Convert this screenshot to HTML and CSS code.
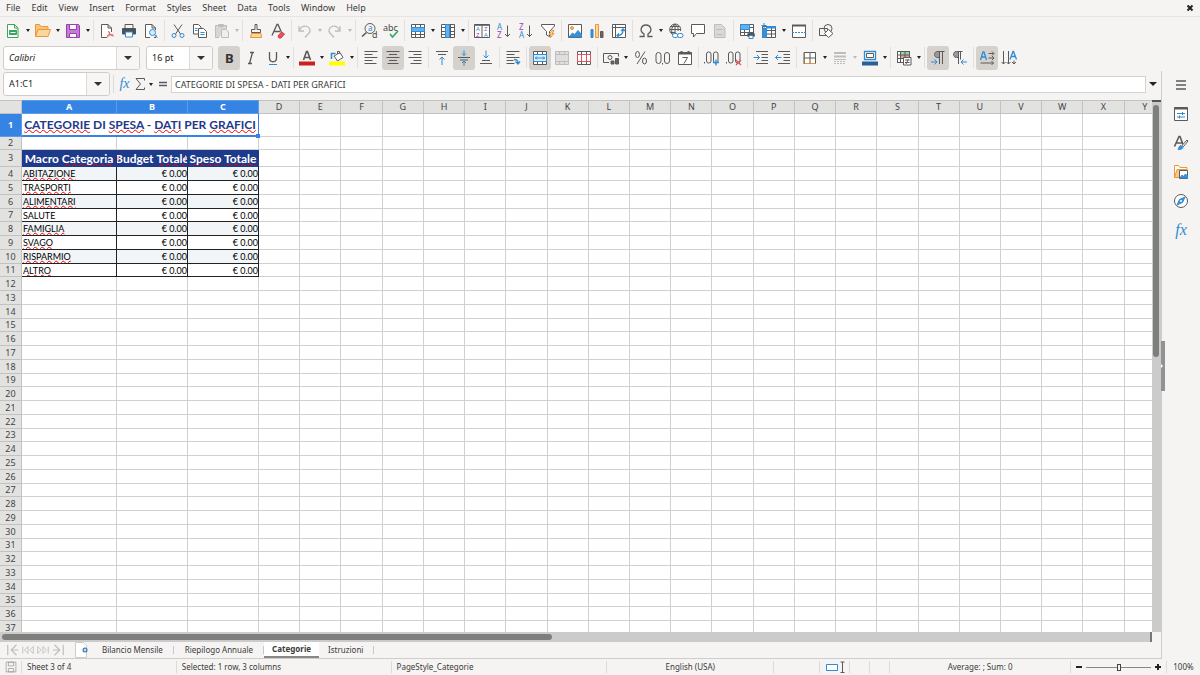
FILE: index.html
```html
<!DOCTYPE html>
<html lang="en">
<head>
<meta charset="utf-8">
<meta name="viewport" content="width=device-width, initial-scale=1">
<title>Categorie</title>
<link rel="stylesheet" href="styles.css">
</head>
<body>
<nav class="menubar" aria-label="Menu">
  <button>File</button><button>Edit</button><button>View</button><button>Insert</button><button>Format</button><button>Styles</button><button>Sheet</button><button>Data</button><button>Tools</button><button>Window</button><button>Help</button>
  <button class="close" aria-label="Close"><svg class="icon tiny" viewBox="0 0 8 8"><path class="heavy" d="M1.5 1.500l5 5M6.500 1.500l-5 5"/></svg></button>
</nav>

<div class="toolbar" role="toolbar" aria-label="Standard">
  <div class="group">
    <button class="tool" aria-label="New"><svg class="icon" viewBox="0 0 16 16"><path class="green" fill="#fff" d="M2.500 1.500h7l3.500 3.500v9.500h-10.500zM9.500 1.500v3.500h3.500"/><path class="green" fill="#3ba659" d="M4.500 7.500h7v4h-7z"/><path stroke="#fff" d="M5.500 9.500h5"/></svg></button><button class="dd" aria-label="New options"></button>
    <button class="tool" aria-label="Open"><svg class="icon" viewBox="0 0 16 16"><path stroke="#e8973a" fill="#f7c47a" d="M.5 13.500v-12h4l1.500 2h7v2.500"/><path stroke="#e8973a" fill="#fbd79b" d="M.5 13.500l2.500-7h12.500l-2.500 7z"/></svg></button><button class="dd" aria-label="Open options"></button>
    <button class="tool" aria-label="Save"><svg class="icon" viewBox="0 0 16 16"><path stroke="#9a3fb0" fill="#c77ad6" d="M1.500 1.500h12l1 1v12h-13z"/><path stroke="#9a3fb0" fill="#fff" d="M4.500 1.500h7v5h-7zM4.500 10.500h7v4h-7z"/></svg></button><button class="dd" aria-label="Save options"></button>
  </div>
  <div class="group">
    <button class="tool" aria-label="Export as PDF"><svg class="icon" viewBox="0 0 16 16"><path fill="#fff" d="M8 14.500h-5.500v-13h6.500l3.500 3.500v4M9 1.500v3.500h3.500"/><path class="red" d="M9.500 8c1 3 2.500 5 5 5M7.500 14.500c2.500-1 3-3 3-5.500M8 13c2-1.500 4-1.500 6.500-1"/></svg></button>
    <button class="tool" aria-label="Print"><svg class="icon" viewBox="0 0 16 16"><path d="M4 5v-3.500h8v3.500"/><rect x="1" y="5" width="14" height="6.500" rx="1" fill="#4a5358" stroke="none"/><path class="blue" fill="#fff" d="M4.500 9h7v5h-7z"/></svg></button>
    <button class="tool" aria-label="Print preview"><svg class="icon" viewBox="0 0 16 16"><path fill="#fff" d="M7 14.500h-4.500v-13h6.500l3.500 3.500v2M9 1.500v3.500h3.500M13 12v2.500h-2"/><circle class="blue" cx="9.500" cy="9.500" r="3" fill="#d9ecfb"/><path class="blue" d="M11.500 11.500l3 3"/></svg></button>
  </div>
  <div class="group">
    <button class="tool" aria-label="Cut"><svg class="icon" viewBox="0 0 16 16"><path d="M4 1.500l6.500 9.500M12 1.500l-6.500 9.500"/><circle class="blue" cx="4" cy="12.500" r="2"/><circle class="blue" cx="12" cy="12.500" r="2"/></svg></button>
    <button class="tool" aria-label="Copy"><svg class="icon" viewBox="0 0 16 16"><path fill="#fff" d="M1.500 1.500h5l2.500 2.500v7h-7.500z"/><path fill="#fff" d="M6.500 5.500h5l3 3v6h-8z"/><path class="blue" d="M3 5.500h2.500M3 7.500h2.500M8.500 9.500h4M8.500 11.500h4"/></svg></button>
    <button class="tool" aria-label="Paste"><svg class="icon dim" viewBox="0 0 16 16"><path fill="#d6d6d6" d="M5 14.500h-3.500v-12h11v3.500M4.500 1.500h5v2h-5z"/><path fill="#eee" d="M7.500 6.500h4.500l2.500 2.500v5.500h-7z"/></svg></button><button class="dd dim" aria-label="Paste options"></button>
  </div>
  <div class="group">
    <button class="tool" aria-label="Clone formatting"><svg class="icon" viewBox="0 0 16 16"><path d="M7 1.500h2v5h3.500v3h-9v-3h3.500z"/><path stroke="#e8973a" fill="#fbd79b" d="M3.500 10.500h9.500l.5 4h-11z"/></svg></button>
    <button class="tool" aria-label="Clear formatting"><svg class="icon" viewBox="0 0 16 16"><path class="mid" d="M2 12.500l5-11h1l4 9M4 8.500h6"/><path stroke="#d9363e" fill="#e5575e" d="M8 13l3.500-4 3 2-3.500 4h-2z"/></svg></button>
  </div>
  <div class="group">
    <button class="tool" aria-label="Undo"><svg class="icon dim" viewBox="0 0 16 16"><path class="mid" d="M2 3v5h5M2 8c2-4 5-5.500 8-4.500s4 4.500 2 6.500l-4 4.500"/></svg></button><button class="dd dim" aria-label="Undo list"></button>
    <button class="tool" aria-label="Redo"><svg class="icon dim" viewBox="0 0 16 16"><path class="mid" d="M13 3v5h-5M13 8c-2-4-5-5.500-8-4.500s-4 4.500-2 6.500l4 4.500"/></svg></button><button class="dd dim" aria-label="Redo list"></button>
  </div>
  <div class="group">
    <button class="tool" aria-label="Find and replace"><svg class="icon" viewBox="0 0 16 16"><circle cx="9" cy="5.500" r="5"/><path class="thick" d="M5.500 9.500l-4.500 4"/><text class="glyph blue-text" x="7" y="8" font-size="8">a</text><text class="glyph" x="11" y="15" font-size="9">d</text></svg></button>
    <button class="tool" aria-label="Spelling"><svg class="icon" viewBox="0 0 16 16"><text class="glyph" x="0" y="8" font-size="9">abc</text><path stroke="#2fa866" class="thick" d="M7 11l2.500 3 5.500-6"/></svg></button>
  </div>
  <div class="group">
    <button class="tool" aria-label="Row"><svg class="icon" viewBox="0 0 16 16"><path fill="#fff" d="M1.500 1.500h13v13h-13zM1.500 4.500h13M1.500 8.500h13M1.500 11.500h13M5.500 1.500v13M10.500 1.500v13"/><path fill="#63b1ee" class="blue" d="M1.500 4.500h13v4h-13z"/></svg></button><button class="dd" aria-label="Row options"></button>
    <button class="tool" aria-label="Column"><svg class="icon" viewBox="0 0 16 16"><path fill="#fff" d="M1.500 1.500h13v13h-13zM1.500 4.500h13M1.500 8.500h13M1.500 11.500h13M5.500 1.500v13M10.500 1.500v13"/><path fill="#63b1ee" class="blue" d="M5.500 1.500h4v13h-4z"/></svg></button><button class="dd" aria-label="Column options"></button>
  </div>
  <div class="group">
    <button class="tool" aria-label="Sort"><svg class="icon" viewBox="0 0 16 16"><path fill="#fff" d="M.5 1.500h15v13h-15zM8 1.500v13"/><path class="thick" d="M.5 2h15"/><text class="glyph blue-text" x="2" y="8" font-size="6">A</text><text class="glyph purple-text" x="10" y="8" font-size="6">Z</text><text class="glyph purple-text" x="2" y="14" font-size="6">Z</text><text class="glyph blue-text" x="10" y="14" font-size="6">A</text></svg></button>
    <button class="tool" aria-label="Sort ascending"><svg class="icon" viewBox="0 0 16 16"><text class="glyph blue-text" x="1" y="7" font-size="8">A</text><text class="glyph purple-text" x="1" y="15" font-size="8">Z</text><path d="M11.500 2.500v11M9 11l2.500 2.500 2.500-2.500"/></svg></button>
    <button class="tool" aria-label="Sort descending"><svg class="icon" viewBox="0 0 16 16"><text class="glyph purple-text" x="1" y="7" font-size="8">Z</text><text class="glyph blue-text" x="1" y="15" font-size="8">A</text><path d="M11.500 2.500v11M9 11l2.500 2.500 2.500-2.500"/></svg></button>
    <button class="tool" aria-label="AutoFilter"><svg class="icon" viewBox="0 0 16 16"><path fill="#fff" d="M1.500 1.500h13v1.500l-5 5.500v5l-3-1.500v-3.500l-5-5.500z"/><path stroke="#e8973a" fill="#fbd79b" d="M12 7.500l-3 4h2l-1 3.500 4-4.500h-2l2-3z"/></svg></button>
  </div>
  <div class="group">
    <button class="tool" aria-label="Image"><svg class="icon" viewBox="0 0 16 16"><path fill="#fff" d="M1.500 1.500h13v13h-13z"/><circle cx="5" cy="5" r="1.500" fill="#fbb65c" stroke="#e8973a"/><path class="blue" fill="#3b8fd3" d="M2 14l3.500-4 2 1.500 3.500-4 3.500 4v2.500z"/></svg></button>
    <button class="tool" aria-label="Chart"><svg class="icon" viewBox="0 0 16 16"><path class="blue" fill="#3b8fd3" d="M2 6.500h2v8h-2z"/><path stroke="#e8973a" fill="#fbd79b" d="M6.500 1.500h3v13h-3z"/><path fill="#666" d="M11.500 8.500h2.500v6h-2.500z"/></svg></button>
    <button class="tool" aria-label="Pivot table"><svg class="icon" viewBox="0 0 16 16"><path fill="#fff" d="M1.500 1.500h13v13h-13zM1.500 4.500h13M4.500 1.500v13"/><path class="blue mid" d="M6.500 12.500c4 0 5.500-1.500 5.500-5.500M10 8l2-2 2 2M8 10.500l-2 2 2 2"/></svg></button>
  </div>
  <div class="group">
    <button class="tool" aria-label="Special character"><svg class="icon" viewBox="0 0 16 16"><path class="mid" d="M1.500 13.500h4.500v-2.500c-5-3-3-9 2-9s7 6 2 9v2.500h4.500"/></svg></button><button class="dd" aria-label="Symbols"></button>
    <button class="tool" aria-label="Hyperlink"><svg class="icon" viewBox="0 0 16 16"><path d="M12.500 8a5.500 5.500 0 1 0-6 4M1.500 6.500h11M2.500 3.500h9M2.500 9.500h5M7 1v10M5 12c-2-3-2-8 2-11 3 2 3.500 5 3 7"/><rect class="blue" x="4.500" y="10.500" width="5.500" height="4" rx="2" fill="#fff"/><rect class="blue" x="9.500" y="10.500" width="5.500" height="4" rx="2" fill="#fff"/></svg></button>
    <button class="tool" aria-label="Comment"><svg class="icon" viewBox="0 0 16 16"><path fill="#fff" d="M1.500 1.500h13v9h-8l-3 3.500v-3.500h-2z"/></svg></button>
    <button class="tool" aria-label="Headers and footers"><svg class="icon dim" viewBox="0 0 16 16"><path fill="#d9d9d9" d="M2.500 1.500h7l3.500 3.500v9.500h-10.500z"/><path d="M4.500 6.500h6M4.500 11.500h6"/></svg></button>
  </div>
  <div class="group">
    <button class="tool" aria-label="Print area"><svg class="icon" viewBox="0 0 16 16"><path fill="#fff" d="M1.500 1.500h13v11h-13zM1.500 4.500h13M1.500 9.500h13M5.500 1.500v11M10.500 1.500v11"/><path class="blue" fill="#63b1ee" d="M1.500 1.500h9v5h-9z"/><rect x="8.500" y="10.500" width="7" height="3" rx="1" fill="#4a5358"/><path class="blue" fill="#fff" d="M10 12.500h4v3h-4z"/></svg></button>
    <button class="tool" aria-label="Freeze rows and columns"><svg class="icon" viewBox="0 0 16 16"><path fill="#fff" d="M1.500 3.500h13v11h-13zM1.500 7.500h13M1.500 11h13M10.500 3.500v11"/><path class="blue" fill="#3b8fd3" d="M1.500 5.500h4v9h-4zM5.500 3.500h9v1.500h-9zM3 0v5M.5 2.500h5"/></svg></button><button class="dd" aria-label="Freeze options"></button>
    <button class="tool" aria-label="Split window"><svg class="icon" viewBox="0 0 16 16"><path fill="#fff" d="M1.500 2v12.500h13v-12.500"/><path class="fat" d="M1 2.500h14"/><path class="blue" stroke-dasharray="2 1" d="M1 9.500h14"/></svg></button>
  </div>
  <div class="group">
    <button class="tool" aria-label="Show draw functions"><svg class="icon" viewBox="0 0 16 16"><path d="M1.500 5.500h8v7h-8z"/><circle cx="10" cy="5.500" r="4"/><path fill="#fff" d="M10.500 6.500l4.500 4-4.500 4-4-4z"/></svg></button>
  </div>
</div>

<div class="toolbar" role="toolbar" aria-label="Formatting">
  <div class="combo font-name"><input class="italic" value="Calibri" aria-label="Font name"><button aria-label="Font list"></button></div>
  <div class="combo font-size"><input value="16 pt" aria-label="Font size"><button aria-label="Font size list"></button></div>
  <div class="group">
    <button class="tool on" aria-label="Bold"><svg class="icon" viewBox="0 0 16 16"><text class="glyph strong" x="4" y="13" font-size="13">B</text></svg></button>
    <button class="tool" aria-label="Italic"><svg class="icon" viewBox="0 0 16 16"><path class="mid" d="M7 2.500h4M5 13.500h4M9.500 2.500l-3 11"/></svg></button>
    <button class="tool" aria-label="Underline"><svg class="icon" viewBox="0 0 16 16"><path class="mid" d="M4.500 2v6c0 5 7 5 7 0v-6"/><path class="blue" d="M4 14.500h8"/></svg></button><button class="dd" aria-label="Underline options"></button>
  </div>
  <div class="group">
    <button class="tool" aria-label="Font color"><svg class="icon" viewBox="0 0 16 16"><path class="thick" d="M4.500 10l3-8.500h1l3 8.500M5.500 7.500h5"/><path fill="#c9211e" stroke="none" d="M0 11.500h16v4h-16z"/></svg></button><button class="dd" aria-label="Font color list"></button>
    <button class="tool" aria-label="Highlighting"><svg class="icon" viewBox="0 0 16 16"><path class="blue thick" d="M2.500 9v-5.500h4"/><path fill="#fff" d="M5 6l6-3.500 3 5-5.500 3.500zM8.500 4v-2.500h2v2"/><path fill="#ff0" stroke="none" d="M0 11.500h16v4h-16z"/></svg></button><button class="dd" aria-label="Highlighting list"></button>
  </div>
  <div class="group">
    <button class="tool" aria-label="Align left"><svg class="icon" viewBox="0 0 16 16"><path d="M1.500 1.500h13M1.500 4.500h8M1.500 7.500h13M1.500 10.500h8M1.500 13.500h12"/></svg></button>
    <button class="tool on" aria-label="Center horizontally"><svg class="icon" viewBox="0 0 16 16"><path d="M1.500 1.500h13M4 4.500h8M1.500 7.500h13M4 10.500h8M2.500 13.500h11"/></svg></button>
    <button class="tool" aria-label="Align right"><svg class="icon" viewBox="0 0 16 16"><path d="M1.500 1.500h13M6.500 4.500h8M1.500 7.500h13M6.500 10.500h8M3.500 13.500h11"/></svg></button>
  </div>
  <div class="group">
    <button class="tool" aria-label="Align top"><svg class="icon" viewBox="0 0 16 16"><path d="M2 1.500h12M4 4.500h8"/><path class="blue" d="M8 15v-8M5.500 9.500l2.500-2.500 2.500 2.500"/></svg></button>
    <button class="tool on" aria-label="Center vertically"><svg class="icon" viewBox="0 0 16 16"><path d="M2 7.500h12M4 10h8"/><path class="blue" d="M8 .5v5M6 3.500l2 2 2-2M8 16v-5M6 13l2-2 2 2"/></svg></button>
    <button class="tool" aria-label="Align bottom"><svg class="icon" viewBox="0 0 16 16"><path d="M4 10.500h8M2 13.500h12"/><path class="blue" d="M8 .5v7.500M5.500 5.500l2.500 2.500 2.500-2.500"/></svg></button>
  </div>
  <div class="group">
    <button class="tool" aria-label="Wrap text"><svg class="icon" viewBox="0 0 16 16"><path d="M1.500 1.500h13M1.500 4.500h8M1.500 7.500h13M1.500 10.500h7M1.500 13.500h8"/><path class="blue mid" d="M9 9.500c3 0 4 .5 4 4M10.500 11.500l2.500 2.500 2-2.500"/></svg></button>
  </div>
  <div class="group">
    <button class="tool on" aria-label="Merge and center cells"><svg class="icon" viewBox="0 0 16 16"><path fill="#fff" d="M1.500 1.500h13v13h-13zM1.500 4.500h13M1.500 11.500h13M5.500 1.500v3M10.500 1.500v3M5.500 11.500v3M10.500 11.500v3"/><path class="blue" fill="#d9ecfb" d="M1.500 4.500h13v7h-13zM3 8h10M5 6.500l-1.500 1.500 1.500 1.500M11 6.500l1.500 1.500-1.500 1.500"/></svg></button>
    <button class="tool" aria-label="Merge cells"><svg class="icon dim" viewBox="0 0 16 16"><path fill="#dedede" d="M1.500 1.500h13v13h-13zM1.500 4.500h13M1.500 11.500h13M5.500 1.500v3M10.500 1.500v3M5.500 11.500v3M10.500 11.500v3"/></svg></button>
    <button class="tool" aria-label="Unmerge cells"><svg class="icon" viewBox="0 0 16 16"><path fill="#fff" d="M1.500 1.500h13v13h-13zM5.500 1.500v13M10.500 1.500v13"/><path class="red" fill="#fff" d="M1.500 4.500h13v7h-13zM5.500 4.500v7M10.500 4.500v7"/></svg></button>
  </div>
  <div class="group">
    <button class="tool" aria-label="Format as currency"><svg class="icon" viewBox="0 0 16 16"><path d="M6 12.500h-5.500v-9h15v3"/><circle cx="7" cy="7.500" r="2"/><path fill="#666" d="M8 11h3v3h-3zM12.500 8.500h3v5.500h-3z"/></svg></button><button class="dd" aria-label="Currency list"></button>
    <button class="tool" aria-label="Format as percent"><svg class="icon" viewBox="0 0 16 16"><ellipse cx="4.500" cy="4.500" rx="2" ry="3"/><ellipse cx="11.500" cy="11" rx="2" ry="3"/><path d="M12 1.500l-8 12.500"/></svg></button>
    <button class="tool" aria-label="Format as number"><svg class="icon" viewBox="0 0 16 16"><rect x="1" y="2.500" width="5" height="11" rx="2.500"/><rect x="9.500" y="2.500" width="5" height="11" rx="2.500"/><path d="M7.500 13v1.500"/></svg></button>
    <button class="tool" aria-label="Format as date"><svg class="icon" viewBox="0 0 16 16"><path fill="#fff" d="M1.500 2.500h13v12h-13z"/><path class="fat" d="M1.500 3.500h13M4.500 1v3M11.500 1v3"/><path d="M5.500 7.500h5l-3.500 6"/></svg></button>
  </div>
  <div class="group">
    <button class="tool" aria-label="Add decimal place"><svg class="icon" viewBox="0 0 16 16"><rect x="2.500" y="2" width="4.500" height="11" rx="2"/><rect x="9.500" y="2" width="4.500" height="11" rx="2"/><path d="M.5 12v1.500"/><path class="blue mid" d="M9 12.500h6M12 9.500v6"/></svg></button>
    <button class="tool" aria-label="Delete decimal place"><svg class="icon" viewBox="0 0 16 16"><rect x="2.500" y="2" width="4.500" height="11" rx="2"/><rect x="9.500" y="2" width="4.500" height="11" rx="2"/><path d="M.5 12v1.500"/><path class="red mid" d="M10 10l5 5M15 10l-5 5"/></svg></button>
  </div>
  <div class="group">
    <button class="tool" aria-label="Increase indent"><svg class="icon" viewBox="0 0 16 16"><path d="M3 1.500h12M8.500 4.500h6.500M8.500 7.500h6.500M8.500 10.500h6.500M3 13.500h12"/><path class="blue" d="M.5 7.500h6M4 5l2.500 2.500-2.500 2.500"/></svg></button>
    <button class="tool" aria-label="Decrease indent"><svg class="icon" viewBox="0 0 16 16"><path d="M3 1.500h12M8.500 4.500h6.500M8.500 7.500h6.500M8.500 10.500h6.500M3 13.500h12"/><path class="blue" d="M.5 7.500h6M3 5l-2.500 2.500 2.500 2.500"/></svg></button>
  </div>
  <div class="group">
    <button class="tool" aria-label="Borders"><svg class="icon" viewBox="0 0 16 16"><path stroke="#e8973a" fill="#fff" d="M2.500 2.500h11v11h-11z"/><path d="M13.500 2.500h-11.500v11.500M8 2.500v11M2 8h12M13.500 2.500v11"/></svg></button><button class="dd" aria-label="Border list"></button>
    <button class="tool" aria-label="Border style"><svg class="icon dim" viewBox="0 0 16 16"><path class="fat" d="M2 3h12M2 6.500h12"/><path d="M2 9.500h12"/><path stroke-dasharray="2 1" d="M2 11.500h12M2 13.500h12"/></svg></button><button class="dd dim" aria-label="Border style list"></button>
    <button class="tool" aria-label="Border color"><svg class="icon" viewBox="0 0 16 16"><path class="blue mid" fill="#fff" d="M2.500 1.500h11v8h-11z"/><path d="M4.500 3.500h7v4h-7z"/><path fill="#2a6099" stroke="none" d="M0 11.500h16v4h-16z"/></svg></button><button class="dd" aria-label="Border color list"></button>
  </div>
  <div class="group">
    <button class="tool" aria-label="Conditional formatting"><svg class="icon" viewBox="0 0 16 16"><path fill="#fff" d="M1.500 1.500h12v11h-12z"/><path fill="#8fd6a8" stroke="none" d="M4 2h9v3h-9z"/><path fill="#f2989c" stroke="none" d="M4 5h9v4h-9z"/><path d="M1.500 1.500h12v11h-12zM1.500 5h12M1.500 8.500h12M4.500 1.500v11M9 1.500v11"/><path fill="#fff" d="M7.500 7.500h7.500v7.500h-7.500zM9 10h4.500M9 12.500h4.500M10 14l2.500-5"/></svg></button><button class="dd" aria-label="Conditional list"></button>
  </div>
  <div class="group">
    <button class="tool on" aria-label="Left-to-right"><svg class="icon" viewBox="0 0 16 16"><path fill="#999" d="M9.500 1.500h-2c-4 0-4 6 0 6h2z"/><path d="M14.500 1.500h-5M9.500 1.500v12.500M12.500 1.500v12.500"/><path class="blue" d="M1 12h6M4.500 9.500l2.500 2.500-2.500 2.500"/></svg></button>
    <button class="tool" aria-label="Right-to-left"><svg class="icon" viewBox="0 0 16 16"><path fill="#999" d="M6.500 1.500h-2c-4 0-4 6 0 6h2z"/><path d="M10.500 1.500h-4M6.500 1.500v12.500M8.500 1.500v8"/><path class="blue" d="M9 12h6M11.500 9.500l-2.500 2.500 2.500 2.500"/></svg></button>
  </div>
  <div class="group">
    <button class="tool on" aria-label="Text direction left to right"><svg class="icon" viewBox="0 0 16 16"><path class="blue mid" d="M1.500 10l2.500-8h1l2.500 8M2.500 7h4"/><path d="M9.500 3.500h5M13 1.500l2 2-2 2M9.500 8h5M13 6l2 2-2 2M1.500 13h13M12.500 11l2 2-2 2"/></svg></button>
    <button class="tool" aria-label="Text direction top to bottom"><svg class="icon" viewBox="0 0 16 16"><path class="blue mid" d="M9 9.500l3-8h.500l3 8M10 6.500h5"/><path d="M2.500 1v13M.5 12l2 2 2-2M7.500 1v13M5.500 12l2 2 2-2M13 10.500v3.500M11 12l2 2 2-2"/></svg></button>
  </div>
</div>

<div class="work">
  <main class="document">
    <div class="formula-bar">
      <div class="combo name-box"><input value="A1:C1" aria-label="Name box"><button aria-label="Named ranges"></button></div>
      <span class="divider"></span>
      <button class="mini" aria-label="Function wizard"><span class="fx">fx</span></button>
      <button class="mini" aria-label="Select function"><svg class="icon" viewBox="0 0 16 16"><path d="M12.500 4.500v-2h-8.500l4.500 5.500-4.500 5.500h8.500v-2"/></svg></button><button class="dd" aria-label="Function list"></button>
      <button class="mini" aria-label="Formula"><svg class="icon" viewBox="0 0 16 16"><path class="thick" d="M4 6.500h8M4 9.500h8"/></svg></button>
      <input class="formula" value="CATEGORIE DI SPESA - DATI PER GRAFICI" aria-label="Input line">
      <button class="dd large" aria-label="Expand formula bar"></button>
    </div>
    <div class="pane">
      <div class="sheet-view"><table class="sheet" id="sheet"></table></div>
      <div class="v-scroll"><div class="v-thumb"></div></div>
    </div>
    <div class="h-scroll"><div class="h-track"><div class="h-thumb"></div></div></div>
    <div class="tabs">
      <div class="tab-nav">
        <button aria-label="First sheet"><svg class="icon dim" viewBox="0 0 16 16"><path class="mid" d="M2 2v12M12 2l-6 6 6 6M6 8h8"/></svg></button>
        <button aria-label="Previous sheet"><svg class="icon dim" viewBox="0 0 16 16"><path d="M2 4v8M8 4l-4 4 4 4zM14 4l-4 4 4 4z"/></svg></button>
        <button aria-label="Next sheet"><svg class="icon dim" viewBox="0 0 16 16"><path d="M14 4v8M8 4l4 4-4 4zM2 4l4 4-4 4z"/></svg></button>
        <button aria-label="Last sheet"><svg class="icon dim" viewBox="0 0 16 16"><path class="mid" d="M14 2v12M4 2l6 6-6 6M2 8h8"/></svg></button>
      </div>
      <button class="add-tab" aria-label="Add sheet"><svg class="icon" viewBox="0 0 16 16"><path fill="#fff" stroke="#ccc" d="M1.500 .5h8l3 3v12h-11z"/><circle cx="11" cy="8" r="2.500" fill="#2a6cb5" stroke="none"/><path stroke="#fff" d="M9.500 8h3M11 6.500v3"/></svg></button>
      <button class="tab">Bilancio Mensile</button><button class="tab">Riepilogo Annuale</button><button class="tab active">Categorie</button><button class="tab">Istruzioni</button>
    </div>
  </main>
  <aside class="sidebar" aria-label="Sidebar">
    <button class="splitter" aria-label="Hide sidebar"></button>
    <button aria-label="Sidebar settings"><svg class="icon" viewBox="0 0 16 16"><path class="thick" d="M3 4h10M3 8h10M3 12h10"/></svg></button>
    <button aria-label="Properties"><svg class="icon" viewBox="0 0 16 16"><path fill="#fff" d="M1.500 1.500h13v13h-13z"/><path class="fat" d="M1 2.500h14"/><path class="blue" d="M4 7.500h8M4 11h8M9.500 6v3M6.500 9.500v3"/></svg></button>
    <button aria-label="Styles"><svg class="icon" viewBox="0 0 16 16"><path class="thick" d="M1.500 11.500l4.500-10h1l3 8M3 8h6"/><path class="blue" fill="#3b8fd3" d="M5 14.500c1-1 .5-3.500 3-4l2 2c-1 2-3 2-5 2z"/><path fill="#fff" d="M9 10.500l5-5.500 1 1-4.500 5.500z"/></svg></button>
    <button aria-label="Gallery"><svg class="icon" viewBox="0 0 16 16"><path stroke="#e8973a" fill="#fff" d="M1.500 13.500v-12h4l1.500 2h7v2"/><path stroke="#e8973a" fill="#fbc98a" d="M1.500 13.500l2.500-8h10v8z"/><path fill="#fff" d="M6.500 6.500h8v8h-8z"/><path class="blue" fill="#3b8fd3" d="M7 14l2-3 1.500 1.500 2-2.500 2 2v2z"/></svg></button>
    <button aria-label="Navigator"><svg class="icon" viewBox="0 0 16 16"><circle cx="8" cy="8" r="6.500" fill="#fff"/><path class="blue" fill="#3b8fd3" d="M12 4l-2.500 5.500-5.500 2.500 2.500-5.500z"/><circle cx="8" cy="8" r="1" fill="#fff" stroke="none"/></svg></button>
    <button aria-label="Functions"><span class="fx big">fx</span></button>
  </aside>
</div>

<footer class="status">
  <span class="middle"><svg class="icon small" viewBox="0 0 16 16"><path stroke="#999" d="M1.500 1.500h13v13h-13zM4.500 1.500h7v5h-7zM4.500 10h7v4.500h-7z"/></svg></span>
  <span>Sheet 3 of 4</span>
  <span>Selected: 1 row, 3 columns</span>
  <span>PageStyle_Categorie</span>
  <span class="middle">English (USA)</span>
  <span></span>
  <span class="middle"><svg class="icon wide" viewBox="0 0 22 12"><path class="blue" fill="#fff" d="M2.500 3.500h11v6h-11z"/><path d="M16.500 1h4M16.500 11.500h4M18.500 1v10.500"/></svg></span>
  <span></span>
  <span></span>
  <span class="middle">Average: ; Sum: 0</span>
  <span class="zoom"><button aria-label="Zoom out"><svg class="icon tiny" viewBox="0 0 8 8"><path class="heavy" d="M1 4h6"/></svg></button><input type="range" min="0" max="100" value="50" aria-label="Zoom"><button aria-label="Zoom in"><svg class="icon tiny" viewBox="0 0 8 8"><path class="heavy" d="M1 4h6M4 1v6"/></svg></button></span>
  <span class="middle">100%</span>
</footer>
<script src="sheet.js"></script>
</body>
</html>
```
FILE: styles.css
```css
* { box-sizing: border-box; }

body {
  margin: 0;
  height: 100vh;
  display: flex;
  flex-direction: column;
  overflow: hidden;
  background: #f5f4f2;
  color: #3a3a3a;
  font: 8px/12px "Noto Sans", sans-serif;
}

button, input { font: inherit; color: inherit; margin: 0; }
button { border: 0; padding: 0; background: none; }
input { min-width: 0; outline: 0; }

/* Icons */
.icon { width: 16px; height: 16px; display: block; flex: none; overflow: visible; fill: none; stroke: #5a5a5a; stroke-width: 1; }
.icon.tiny { width: 8px; height: 8px; }
.icon.small { width: 12px; height: 12px; }
.icon.wide { width: 22px; height: 12px; }
.icon .mid { stroke-width: 1.3; }
.icon .thick { stroke-width: 1.6; }
.icon .fat { stroke-width: 2; }
.icon .heavy { stroke: #222; stroke-width: 2; }
.icon .blue { stroke: #2f8bd3; }
.icon .red { stroke: #e0555b; }
.icon .green { stroke: #3ba659; }
.icon.dim { stroke: #bdbdbd; }
.glyph { stroke: none; fill: #4a4a4a; font-family: "Noto Sans", sans-serif; }
.glyph.strong { font-weight: 700; fill: #333; }
.glyph.blue-text { fill: #2f8bd3; }
.glyph.purple-text { fill: #a23fb5; }

/* Menu */
.menubar {
  display: flex;
  flex: none;
  gap: 11px;
  height: 17px;
  padding: 0 6px;
  border-bottom: 1px solid #e6e4e2;
  font-size: 9px;
}
.close { margin-left: auto; display: flex; align-items: center; }

/* Toolbars */
.toolbar { display: flex; flex: none; align-items: center; height: 27px; padding-left: 2px; }
.group { display: flex; align-items: center; }
.group + .group::before { content: ""; width: 1px; height: 21px; margin: 0 2px; background: #e2e0de; }
.tool { width: 22px; height: 24px; display: grid; place-items: center; border-radius: 3px; }
.tool.on { background: #d5d1cd; }
.dd { width: 8px; height: 20px; display: grid; place-items: center; flex: none; }
.dd:last-child { width: 7px; }
.dd::before { content: ""; border: 2px solid transparent; border-top: 3px solid #222; border-bottom: 0; }
.dd.dim::before { border-top-color: #bbb; }
.formula-bar .dd.large { width: 14px; }
.dd.large::before { border-width: 4px 4px 0; }

.combo {
  display: flex;
  flex: none;
  height: 24px;
  border: 1px solid #cfccc9;
  border-radius: 3px;
  background: #fff;
  color: #222;
  font-size: 9px;
  overflow: hidden;
}
.combo input { flex: 1; border: 0; padding: 0 5px; background: none; }
.combo button { width: 23px; border-left: 1px solid #dcdad8; background: #f7f6f5; display: grid; place-items: center; }
.combo button::before { content: ""; border: 4px solid transparent; border-top-color: #333; border-bottom: 0; }
.italic { font-style: italic; }
.font-name { width: 137px; margin: 0 6px 0 1px; }
.font-size { width: 67px; margin-right: 5px; }
.name-box { width: 107px; }

/* Work area */
.work { display: flex; flex: 1; min-height: 0; }
.document { display: flex; flex-direction: column; flex: 1; min-width: 0; border-right: 1px solid #cfcdcb; }
.formula-bar { display: flex; flex: none; align-items: center; height: 29px; padding: 0 1px 3px 3px; }
.divider { width: 1px; height: 18px; margin: 0 3px; background: #dddbd9; }
.mini { width: 15px; height: 20px; display: grid; place-items: center; overflow: hidden; flex: none; }
.fx { color: #2f8bd3; font: italic 14px/16px "Liberation Serif", serif; }
.fx.big { font-size: 16px; }
.formula { flex: 1; height: 17px; margin-left: 1px; padding: 0 3px; border: 1px solid #d5d3d1; background: #fff; font-size: 9px; }

.pane { display: flex; flex: 1; min-height: 0; }
.sheet-view { flex: 1; min-width: 0; overflow: hidden; background: #fff; }
.v-scroll { width: 9px; flex: none; background: #cbcbcb; border-top: 2px solid #555; padding: 3px 2px 3px 1px; }
.v-thumb { height: 48%; border-radius: 3px; background: #7d7f7d; }
.h-scroll { flex: none; height: 10px; padding-right: 9px; }
.h-track { height: 10px; padding: 2px; background: #cbcbcb; border-right: 2px solid #777; }
.h-thumb { width: 48%; height: 6px; border-radius: 3px; background: #7d7f7d; }

/* Cells */
.sheet { width: 1166px; table-layout: fixed; border-collapse: separate; border-spacing: 0; font: 9px/11px Lato, sans-serif; color: #000; }
.sheet th, .sheet td { height: 14px; padding: 0; border: 0 solid #d0d0d0; border-width: 0 1px 1px 0; overflow: hidden; white-space: nowrap; }
.sheet th { background: #e2e2e1; border-color: #c2c2c2; color: #444; font: 9px/10px "Noto Sans", sans-serif; text-align: center; }
.sheet th.picked { background: #3584e4; border-color: #5b9ceb; color: #fff; font-weight: 700; }
.sheet tr.short > * { height: 13px; }
.sheet thead th { border-top: 1px solid #c2c2c2; }
.col-head { width: 22px; }
.col-a { width: 95px; }
.col-b, .col-c { width: 71px; }
.sheet .title-row > * { height: 23px; }
.sheet .header-row > * { height: 17px; }
.sheet .title {
  position: relative;
  overflow: visible;
  border: 0 solid #3584e4;
  border-width: 0 1px 2px 0;
  color: #1e3a8a;
  font-size: 12px;
  line-height: 18px;
  font-weight: 700;
  text-align: center;
}
.title::after { content: ""; position: absolute; right: -2px; bottom: -3px; width: 4px; height: 4px; background: #3584e4; }
.sheet .label { background: #1e3a8a; border-color: #1e3a8a; color: #fff; font-size: 12px; line-height: 13px; font-weight: 700; text-align: center; }
.label.cut { position: relative; }
.label.cut div { display: flex; justify-content: center; }
.label.cut::before, .label.cut::after { position: absolute; top: 5px; border: 3px solid transparent; content: ""; z-index: 1; }
.label.cut::before { left: -1px; border-left: 0; border-right-color: #f4b6b6; }
.label.cut::after { right: -1px; border-right: 0; border-left-color: #f4b6b6; }
.sheet .data { border-color: #222; padding-left: 1px; }
.sheet .money { text-align: right; }
.sheet .tint { background: #f1f5f8; }
.typo { text-decoration: underline wavy #f00 1px; text-underline-offset: 0; text-decoration-skip-ink: none; }

/* Sheet tabs */
.tabs { display: flex; flex: none; height: 17px; border-bottom: 1px solid #cfcdcb; }
.tab-nav { display: flex; align-items: center; padding: 0 8px 0 5px; }
.tab-nav button { width: 15px; display: grid; place-items: center; }
.tab-nav .icon { width: 14px; height: 14px; }
.add-tab { width: 18px; display: grid; place-items: center; }
.tab { position: relative; padding: 0 11px; }
.tab::after { content: ""; position: absolute; right: 0; top: 4px; height: 8px; border-right: 1px solid #c8c6c4; }
.tab.active { padding: 0 8px; background: #fff; border-bottom: 2px solid #888; font-weight: 700; }
.tab.active::after { display: none; }
.tabs .tab:last-child { padding-left: 9px; }

/* Sidebar */
.sidebar { position: relative; display: flex; flex-direction: column; align-items: center; gap: 13px; width: 38px; flex: none; padding-top: 6px; }
.sidebar > button { height: 16px; }
.sidebar > .splitter { position: absolute; left: -1px; top: 46%; width: 4px; height: 50px; background: #929292; }
.splitter::before { content: ""; display: block; border: 2px solid transparent; border-left-color: #fff; border-right: 0; }

/* Status bar */
.status {
  display: grid;
  flex: none;
  grid-template-columns: 22px 155fr 215fr 216fr 167fr 46px 30px 20px 20px 181fr 96px 33px;
  align-items: center;
  height: 16px;
}
.status > span { padding-left: 5px; white-space: nowrap; height: 12px; border-right: 1px solid #dddbd9; }
.status > span:last-child { border: 0; }
.status > .middle { padding: 0; display: flex; align-items: center; justify-content: center; }
.status > .zoom { display: flex; align-items: center; gap: 3px; padding: 0 4px; }
.zoom input { flex: 1; height: 12px; appearance: none; background: none; }
.zoom input::-webkit-slider-runnable-track { height: 1px; background: #888; }
.zoom input::-webkit-slider-thumb { appearance: none; width: 4px; height: 7px; margin-top: -3px; border: 1px solid #444; background: #f5f4f2; }
```
FILE: sheet.js
```js
const letters = "ABCDEFGHIJKLMNOPQRSTUVWXY".split("");
const categories = ["ABITAZIONE", "TRASPORTI", "ALIMENTARI", "SALUTE", "FAMIGLIA", "SVAGO", "RISPARMIO", "ALTRO"];
const lastRow = 37;
const typo = (word) => `<span class="typo">${word}</span>`;
const empty = (count) => "<td></td>".repeat(count);

function rowCells(n) {
  if (n === 1) {
    return `<td class="title" colspan="3">${typo("CATEGORIE")} DI ${typo("SPESA")} - ${typo("DATI")} PER ${typo("GRAFICI")}</td>` + empty(22);
  }
  if (n === 3) {
    return `<td class="label">Macro ${typo("Categoria")}</td>` +
      `<td class="label cut"><div>Budget&nbsp;${typo("Totale")}</div></td>` +
      `<td class="label">${typo("Speso")} ${typo("Totale")}</td>` + empty(22);
  }
  const name = categories[n - 4];
  if (name) {
    const tint = n % 2 ? "" : " tint";
    const money = `<td class="data money${tint}">€ 0.00</td>`;
    return `<td class="data${tint}">${name === "SALUTE" ? name : typo(name)}</td>` + money + money + empty(22);
  }
  return empty(25);
}

let html = '<colgroup><col class="col-head"><col class="col-a"><col class="col-b"><col class="col-c"><col span="22"></colgroup>';
html += '<thead><tr><th></th>' + letters.map((l, i) => `<th${i < 3 ? ' class="picked"' : ""}>${l}</th>`).join("") + "</tr></thead><tbody>";
for (let n = 1; n <= lastRow; n++) {
  const kind = n === 1 ? "title-row" : n === 3 ? "header-row" : n === 2 || n % 4 === 3 ? "short" : "";
  html += `<tr class="${kind}"><th${n === 1 ? ' class="picked"' : ""}>${n}</th>${rowCells(n)}</tr>`;
}
document.getElementById("sheet").innerHTML = html + "</tbody>";
```
